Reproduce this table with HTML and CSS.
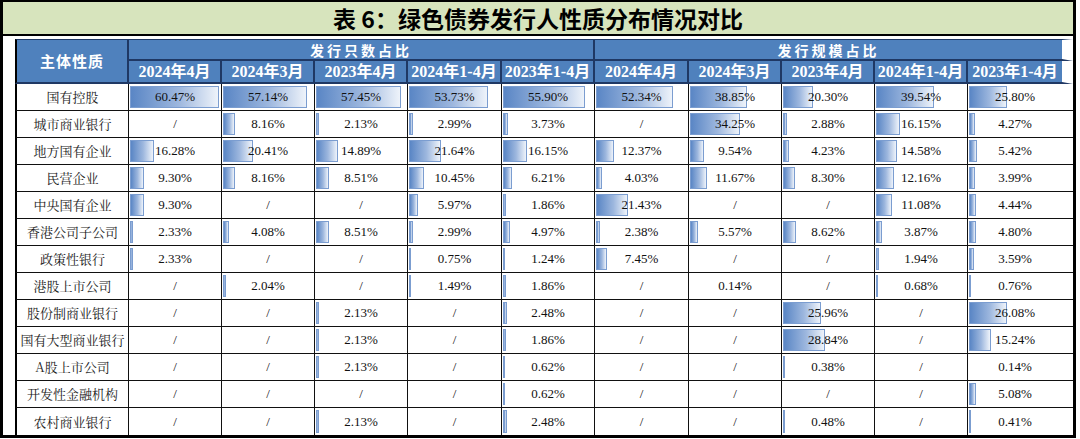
FILE: index.html
```html
<!DOCTYPE html>
<html lang="zh-CN">
<head>
<meta charset="utf-8">
<title>绿色债券发行人性质分布情况对比</title>
<link rel="stylesheet" href="styles.css">
</head>
<body>
<div class="frame">
  <div class="title">表 6：绿色债券发行人性质分布情况对比</div>
  <div class="body">
    <table class="grid">
      <colgroup>
        <col class="c-label">
        <col class="c93"><col class="c93"><col class="c93"><col class="c94"><col class="c93">
        <col class="c94"><col class="c93"><col class="c93"><col class="c93">
        <col class="c-last">
      </colgroup>
      <thead>
        <tr class="h1">
          <th class="corner" rowspan="2">主体性质</th>
          <th class="group" colspan="5">发行只数占比</th>
          <th class="group last" colspan="5">发行规模占比</th>
        </tr>
        <tr class="h2">
          <th>2024年4月</th><th>2024年3月</th><th>2023年4月</th><th>2024年1-4月</th><th>2023年1-4月</th>
          <th>2024年4月</th><th>2024年3月</th><th>2023年4月</th><th>2024年1-4月</th><th class="last">2023年1-4月</th>
        </tr>
      </thead>
      <tbody>
        <tr>
          <td class="label">国有控股</td>
          <td><i class="bar" style="--r:1"></i>60.47%</td>
          <td><i class="bar" style="--r:.945"></i>57.14%</td>
          <td><i class="bar" style="--r:.950"></i>57.45%</td>
          <td><i class="bar" style="--r:.889"></i>53.73%</td>
          <td><i class="bar" style="--r:.924"></i>55.90%</td>
          <td><i class="bar" style="--r:.866"></i>52.34%</td>
          <td><i class="bar" style="--r:.642"></i>38.85%</td>
          <td><i class="bar" style="--r:.336"></i>20.30%</td>
          <td><i class="bar" style="--r:.654"></i>39.54%</td>
          <td class="last"><i class="bar" style="--r:.427"></i>25.80%</td>
        </tr>
        <tr>
          <td class="label">城市商业银行</td>
          <td>/</td>
          <td><i class="bar" style="--r:.135"></i>8.16%</td>
          <td><i class="bar" style="--r:.0352"></i>2.13%</td>
          <td><i class="bar" style="--r:.0494"></i>2.99%</td>
          <td><i class="bar" style="--r:.0617"></i>3.73%</td>
          <td>/</td>
          <td><i class="bar" style="--r:.566"></i>34.25%</td>
          <td><i class="bar" style="--r:.0476"></i>2.88%</td>
          <td><i class="bar" style="--r:.267"></i>16.15%</td>
          <td class="last"><i class="bar" style="--r:.0706"></i>4.27%</td>
        </tr>
        <tr>
          <td class="label">地方国有企业</td>
          <td><i class="bar" style="--r:.269"></i>16.28%</td>
          <td><i class="bar" style="--r:.338"></i>20.41%</td>
          <td><i class="bar" style="--r:.246"></i>14.89%</td>
          <td><i class="bar" style="--r:.358"></i>21.64%</td>
          <td><i class="bar" style="--r:.267"></i>16.15%</td>
          <td><i class="bar" style="--r:.205"></i>12.37%</td>
          <td><i class="bar" style="--r:.158"></i>9.54%</td>
          <td><i class="bar" style="--r:.070"></i>4.23%</td>
          <td><i class="bar" style="--r:.241"></i>14.58%</td>
          <td class="last"><i class="bar" style="--r:.0896"></i>5.42%</td>
        </tr>
        <tr>
          <td class="label">民营企业</td>
          <td><i class="bar" style="--r:.154"></i>9.30%</td>
          <td><i class="bar" style="--r:.135"></i>8.16%</td>
          <td><i class="bar" style="--r:.141"></i>8.51%</td>
          <td><i class="bar" style="--r:.173"></i>10.45%</td>
          <td><i class="bar" style="--r:.103"></i>6.21%</td>
          <td><i class="bar" style="--r:.0666"></i>4.03%</td>
          <td><i class="bar" style="--r:.193"></i>11.67%</td>
          <td><i class="bar" style="--r:.137"></i>8.30%</td>
          <td><i class="bar" style="--r:.201"></i>12.16%</td>
          <td class="last"><i class="bar" style="--r:.066"></i>3.99%</td>
        </tr>
        <tr>
          <td class="label">中央国有企业</td>
          <td><i class="bar" style="--r:.154"></i>9.30%</td>
          <td>/</td>
          <td>/</td>
          <td><i class="bar" style="--r:.0987"></i>5.97%</td>
          <td><i class="bar" style="--r:.0308"></i>1.86%</td>
          <td><i class="bar" style="--r:.354"></i>21.43%</td>
          <td>/</td>
          <td>/</td>
          <td><i class="bar" style="--r:.183"></i>11.08%</td>
          <td class="last"><i class="bar" style="--r:.0734"></i>4.44%</td>
        </tr>
        <tr>
          <td class="label">香港公司子公司</td>
          <td><i class="bar" style="--r:.0385"></i>2.33%</td>
          <td><i class="bar" style="--r:.0675"></i>4.08%</td>
          <td><i class="bar" style="--r:.141"></i>8.51%</td>
          <td><i class="bar" style="--r:.0494"></i>2.99%</td>
          <td><i class="bar" style="--r:.0822"></i>4.97%</td>
          <td><i class="bar" style="--r:.0394"></i>2.38%</td>
          <td><i class="bar" style="--r:.0921"></i>5.57%</td>
          <td><i class="bar" style="--r:.1426"></i>8.62%</td>
          <td><i class="bar" style="--r:.064"></i>3.87%</td>
          <td class="last"><i class="bar" style="--r:.0794"></i>4.80%</td>
        </tr>
        <tr>
          <td class="label">政策性银行</td>
          <td><i class="bar" style="--r:.0385"></i>2.33%</td>
          <td>/</td>
          <td>/</td>
          <td><i class="bar" style="--r:.0124"></i>0.75%</td>
          <td><i class="bar" style="--r:.0205"></i>1.24%</td>
          <td><i class="bar" style="--r:.123"></i>7.45%</td>
          <td>/</td>
          <td>/</td>
          <td><i class="bar" style="--r:.0321"></i>1.94%</td>
          <td class="last"><i class="bar" style="--r:.0594"></i>3.59%</td>
        </tr>
        <tr>
          <td class="label">港股上市公司</td>
          <td>/</td>
          <td><i class="bar" style="--r:.0337"></i>2.04%</td>
          <td>/</td>
          <td><i class="bar" style="--r:.0246"></i>1.49%</td>
          <td><i class="bar" style="--r:.0308"></i>1.86%</td>
          <td>/</td>
          <td>0.14%</td>
          <td>/</td>
          <td><i class="bar" style="--r:.0112"></i>0.68%</td>
          <td class="last"><i class="bar" style="--r:.0126"></i>0.76%</td>
        </tr>
        <tr>
          <td class="label">股份制商业银行</td>
          <td>/</td>
          <td>/</td>
          <td><i class="bar" style="--r:.0352"></i>2.13%</td>
          <td>/</td>
          <td><i class="bar" style="--r:.041"></i>2.48%</td>
          <td>/</td>
          <td>/</td>
          <td><i class="bar" style="--r:.429"></i>25.96%</td>
          <td>/</td>
          <td class="last"><i class="bar" style="--r:.431"></i>26.08%</td>
        </tr>
        <tr>
          <td class="label">国有大型商业银行</td>
          <td>/</td>
          <td>/</td>
          <td><i class="bar" style="--r:.0352"></i>2.13%</td>
          <td>/</td>
          <td><i class="bar" style="--r:.0308"></i>1.86%</td>
          <td>/</td>
          <td>/</td>
          <td><i class="bar" style="--r:.477"></i>28.84%</td>
          <td>/</td>
          <td class="last"><i class="bar" style="--r:.252"></i>15.24%</td>
        </tr>
        <tr>
          <td class="label">A股上市公司</td>
          <td>/</td>
          <td>/</td>
          <td><i class="bar" style="--r:.0352"></i>2.13%</td>
          <td>/</td>
          <td><i class="bar" style="--r:.0103"></i>0.62%</td>
          <td>/</td>
          <td>/</td>
          <td><i class="bar" style="--r:.0063"></i>0.38%</td>
          <td>/</td>
          <td class="last">0.14%</td>
        </tr>
        <tr>
          <td class="label">开发性金融机构</td>
          <td>/</td>
          <td>/</td>
          <td>/</td>
          <td>/</td>
          <td><i class="bar" style="--r:.0103"></i>0.62%</td>
          <td>/</td>
          <td>/</td>
          <td>/</td>
          <td>/</td>
          <td class="last"><i class="bar" style="--r:.084"></i>5.08%</td>
        </tr>
        <tr class="final">
          <td class="label">农村商业银行</td>
          <td>/</td>
          <td>/</td>
          <td><i class="bar" style="--r:.0352"></i>2.13%</td>
          <td>/</td>
          <td><i class="bar" style="--r:.041"></i>2.48%</td>
          <td>/</td>
          <td>/</td>
          <td><i class="bar" style="--r:.0079"></i>0.48%</td>
          <td>/</td>
          <td class="last"><i class="bar" style="--r:.0068"></i>0.41%</td>
        </tr>
      </tbody>
    </table>
  </div>
</div>
</body>
</html>
```

FILE: styles.css
```css
html, body {
  margin: 0;
  padding: 0;
  background: #fff;
}

.frame {
  width: 1076px;
  height: 438px;
  box-sizing: border-box;
  border: 3px solid #000;
  border-top-width: 2px;
  display: flex;
  flex-direction: column;
  background: #fff;
}

.title {
  height: 32px;
  flex: none;
  background: #d7e4bd;
  border-bottom: 2px solid #000;
  display: flex;
  align-items: center;
  justify-content: center;
  font-family: "Noto Sans CJK SC", "Noto Sans", sans-serif;
  font-weight: 700;
  font-size: 23px;
  color: #000;
  line-height: 1;
}

.body {
  flex: 1;
  padding: 3px 0 0 12px;
}

.grid {
  border-collapse: separate;
  border-spacing: 0;
  table-layout: fixed;
  width: 1058px;
}

.c-label { width: 114px; }
.c93 { width: 93px; }
.c94 { width: 94px; }
.c-last { width: 105px; }

.grid th,
.grid td {
  box-sizing: border-box;
  padding: 0;
  text-align: center;
  vertical-align: middle;
  white-space: nowrap;
}

/* header */
.grid th {
  background: #4f81bd;
  color: #fff;
  border-right: 2px solid #1f3864;
  border-bottom: 2px solid #1f3864;
}

.h1 th {
  height: 22px;
  border-top: 1px solid #1f3864;
  font-family: "Noto Sans CJK SC", sans-serif;
  font-weight: 700;
  font-size: 14px;
  letter-spacing: 3px;
  line-height: 18px;
}

.grid th.corner {
  border-left: 2px solid #000;
  font-size: 15px;
  letter-spacing: 1px;
}

.h2 th {
  height: 23px;
  font-family: "Liberation Serif", "Noto Sans CJK SC", serif;
  font-weight: 700;
  font-size: 16px;
  line-height: 20px;
  overflow: visible;
}

.grid th.last {
  border-right: 11px solid #fff;
}

/* body */
.grid td {
  position: relative;
  z-index: 0;
  height: 27px;
  border-right: 1px solid #111;
  border-bottom: 1px solid #111;
  font-family: "Liberation Serif", "Times New Roman", serif;
  font-size: 13px;
  color: #111;
  line-height: 18px;
}

.grid td.label {
  border-left: 2px solid #000;
  font-family: "Noto Serif CJK SC", "Liberation Serif", "Noto Sans CJK SC", serif;
  font-size: 13px;
  color: #1a1a1a;
}

.grid td.last {
  border-right: 0;
  padding-right: 11px;
}

.grid tr.final td {
  border-bottom: 0;
}

.bar {
  position: absolute;
  z-index: -1;
  left: 1px;
  top: 2px;
  bottom: 2px;
  width: calc(89px * var(--r));
  box-sizing: border-box;
  border: 1px solid #7b9dd0;
  background: linear-gradient(to right, #5a86c5 0%, #9db7de 55%, #eef3fa 100%);
}
```
